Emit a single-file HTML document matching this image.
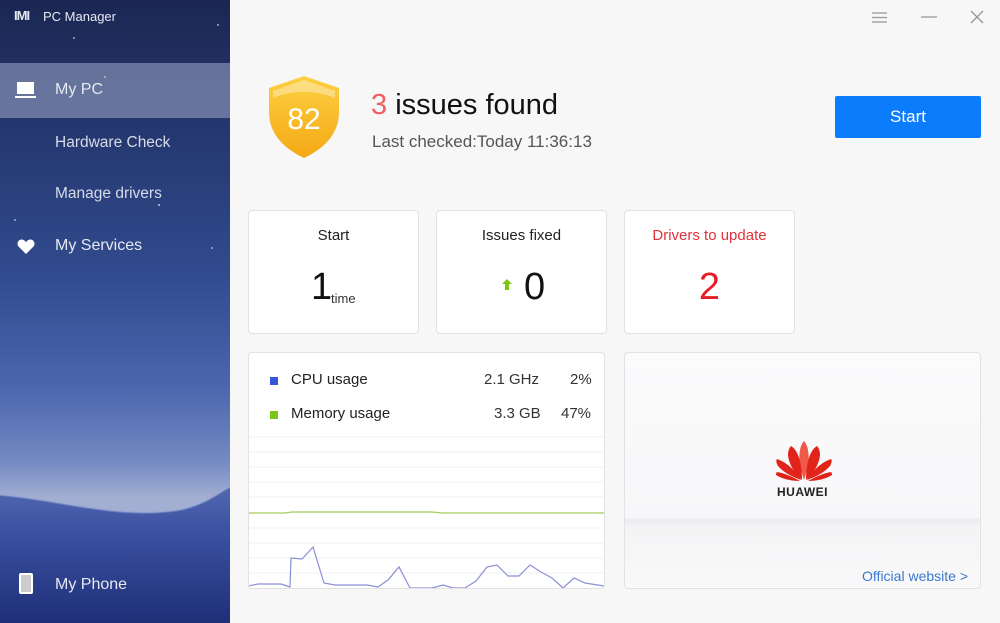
<!DOCTYPE html>
<html><head><meta charset="utf-8"><style>
*{margin:0;padding:0;box-sizing:border-box}
body{width:1000px;height:623px;overflow:hidden;background:#f7f7f8;font-family:"Liberation Sans",sans-serif;position:relative}
.side{position:absolute;left:0;top:0;width:230px;height:623px;overflow:hidden;
background:linear-gradient(180deg,#1b2752 0%,#253870 22%,#324c90 45%,#4a66ad 62%,#7389c2 74%,#a3afd2 80%);}
.dune{position:absolute;left:0;top:0}
.side .t{position:absolute;color:#e6e9f2;font-size:16px}
.card{position:absolute;background:#fff;border:1px solid #e2e2e4;border-radius:4px}
.abs{position:absolute}
</style></head><body>
<div class="side">
<svg class="dune" width="230" height="623">
<defs><linearGradient id="d" x1="0" y1="0" x2="0" y2="1"><stop offset="0" stop-color="#5268b0"/><stop offset="0.35" stop-color="#3a50a0"/><stop offset="1" stop-color="#1f2f78"/></linearGradient></defs>
<path d="M0 495 C60 500 120 520 180 510 C205 505 220 492 230 487 L230 623 L0 623Z" fill="url(#d)"/>
<path d="M0 495 C60 500 120 520 180 510 C205 505 220 492 230 487" stroke="#8ea0d4" stroke-width="2" fill="none" opacity=".5"/>
<circle cx="218" cy="25" r="1" fill="#aab"/><circle cx="74" cy="38" r="1" fill="#aab"/><circle cx="105" cy="77" r="1" fill="#ccd"/><circle cx="159" cy="205" r="1" fill="#ccd"/><circle cx="15" cy="220" r="1" fill="#aab"/><circle cx="212" cy="248" r="1" fill="#aab"/>
</svg>
<div class="abs" style="left:0;top:63px;width:230px;height:55px;background:rgba(160,170,200,.55)"></div>
<div class="t" style="left:14px;top:8px;font-size:13px;font-weight:bold;letter-spacing:-1px">IMI</div>
<div class="t" style="left:43px;top:9px;font-size:13px">PC Manager</div>
<svg class="abs" style="left:15px;top:82px" width="22" height="17"><rect x="2" y="0" width="17" height="12" fill="#fff"/><rect x="0" y="14" width="21" height="2" fill="#fff"/></svg>
<div class="t" style="left:55px;top:81px">My PC</div>
<div class="t" style="left:55px;top:134px;color:#d6dbe8;font-size:15.5px">Hardware Check</div>
<div class="t" style="left:55px;top:185px;color:#d6dbe8;font-size:15.5px">Manage drivers</div>
<svg class="abs" style="left:17px;top:239px" width="18" height="16"><path d="M9 15 L1.5 7.5 C-1 4.5 1.5 0 5 0.5 C7 0.8 8.3 2 9 3.2 C9.7 2 11 0.8 13 0.5 C16.5 0 19 4.5 16.5 7.5Z" fill="#fff"/></svg>
<div class="t" style="left:55px;top:237px">My Services</div>
<div class="abs" style="left:19px;top:573px;width:14px;height:21px;border:2px solid #fff;border-radius:2px;background:#ccc"></div>
<div class="t" style="left:55px;top:576px">My Phone</div>
</div>

<svg class="abs" style="left:870px;top:10px" width="115" height="16">
<g stroke="#999" stroke-width="1.3"><line x1="2" y1="3" x2="17" y2="3"/><line x1="2" y1="7.5" x2="17" y2="7.5"/><line x1="2" y1="12" x2="17" y2="12"/>
<line x1="51" y1="7" x2="67" y2="7"/><line x1="101" y1="1" x2="113" y2="13"/><line x1="113" y1="1" x2="101" y2="13"/></g></svg>

<svg class="abs" style="left:266px;top:74px" width="76" height="86">
<defs><linearGradient id="s" x1="0" y1="0" x2="0" y2="1"><stop offset="0" stop-color="#fdd043"/><stop offset="1" stop-color="#f4a915"/></linearGradient></defs>
<path d="M38 2 L73 14 L73 38 C73 62 55 76 38 84 C21 76 3 62 3 38 L3 14Z" fill="url(#s)"/>
<path d="M38 6 L69 17 L69 24 C50 16 26 16 7 24 L7 17Z" fill="#fff" opacity=".35"/>
<text x="38" y="55" font-family="Liberation Sans" font-size="30" fill="#fff" text-anchor="middle">82</text>
</svg>
<div class="abs" style="left:371px;top:89px;font-size:29px;color:#111"><span style="color:#ee5f5f">3</span> issues found</div>
<div class="abs" style="left:372px;top:132px;font-size:17px;color:#555">Last checked:Today 11:36:13</div>
<div class="abs" style="left:835px;top:96px;width:146px;height:42px;background:#0b7dfc;color:#fff;font-size:17px;text-align:center;line-height:42px;border-radius:2px">Start</div>

<div class="card" style="left:248px;top:210px;width:171px;height:124px">
<div class="abs" style="width:100%;top:16px;text-align:center;font-size:15px;color:#222">Start</div>
<div class="abs" style="left:62px;top:55px;font-size:38px;color:#111">1</div>
<div class="abs" style="left:82px;top:80px;font-size:13px;color:#333">time</div></div>
<div class="card" style="left:436px;top:210px;width:171px;height:124px">
<div class="abs" style="width:100%;top:16px;text-align:center;font-size:15px;color:#222">Issues fixed</div>
<svg class="abs" style="left:65px;top:68px" width="10" height="11"><path d="M5 0 L10 5 L7 5 L7 11 L3 11 L3 5 L0 5Z" fill="#7ac70e"/></svg>
<div class="abs" style="left:87px;top:55px;font-size:38px;color:#111">0</div></div>
<div class="card" style="left:624px;top:210px;width:171px;height:124px">
<div class="abs" style="width:100%;top:16px;text-align:center;font-size:15px;color:#e0323a">Drivers to update</div>
<div class="abs" style="width:100%;top:55px;text-align:center;font-size:38px;color:#e51d25">2</div></div>

<div class="card" style="left:248px;top:352px;width:357px;height:237px;overflow:hidden">
<div class="abs" style="left:21px;top:24px;width:8px;height:8px;background:#3355d6"></div>
<div class="abs" style="left:42px;top:18px;font-size:15px;color:#222">CPU usage</div>
<div class="abs" style="left:235px;top:18px;font-size:15px;color:#333">2.1 GHz</div>
<div class="abs" style="left:321px;top:18px;font-size:15px;color:#333">2%</div>
<div class="abs" style="left:21px;top:58px;width:8px;height:8px;background:#7ec21a"></div>
<div class="abs" style="left:42px;top:52px;font-size:15px;color:#222">Memory usage</div>
<div class="abs" style="left:245px;top:52px;font-size:15px;color:#333">3.3 GB</div>
<div class="abs" style="left:312px;top:52px;font-size:15px;color:#333">47%</div>
<svg class="abs" style="left:-249px;top:-353px" width="1000" height="623">
<g stroke="#f2f2f4" stroke-width="1">
<line x1="248" y1="437" x2="604" y2="437"/><line x1="248" y1="452" x2="604" y2="452"/><line x1="248" y1="467" x2="604" y2="467"/><line x1="248" y1="482" x2="604" y2="482"/><line x1="248" y1="497" x2="604" y2="497"/><line x1="248" y1="528" x2="604" y2="528"/><line x1="248" y1="543" x2="604" y2="543"/><line x1="248" y1="558" x2="604" y2="558"/><line x1="248" y1="573" x2="604" y2="573"/></g>
<polyline fill="none" stroke="#a5cc5a" stroke-width="1.3" points="248,513 285,513 292,512 432,512 442,513 604,513"/>
<polyline fill="none" stroke="#8a8fd8" stroke-width="1.2" points="248,586 258,584 281,584 290,587 291,558 302,559 313,547 324,583 335,585 367,585 378,587 388,580 399,567 410,588 432,588 443,585 453,588 465,588 476,581 487,567 497,565 508,576 519,576 530,565 541,572 552,578 563,588 574,578 585,583 604,586"/>
</svg></div>

<div class="card" style="left:624px;top:352px;width:357px;height:237px;overflow:hidden;background:linear-gradient(180deg,#fbfbfc 0%,#f7f7f9 70%,#ececef 71%,#f4f4f6 74%,#f9f9fa 100%)">
<svg class="abs" style="left:149px;top:86px" width="60" height="44">
<g fill="#e2231a">
<path d="M30 41 C27 32 24 21 26 11 C27 5 30 2 30 2 C30 2 33 5 34 11 C36 21 33 32 30 41Z" fill="#ef5a4a"/>
<path d="M28 41 C21 35 15 26 14 16 C14 11 16 8 17 7 C24 11 28 24 28 41Z"/>
<path d="M32 41 C39 35 45 26 46 16 C46 11 44 8 43 7 C36 11 32 24 32 41Z"/>
<path d="M27 41 C19 38 10 34 4 27 C2 24 2 21 3 20 C12 23 21 31 27 41Z"/>
<path d="M33 41 C41 38 50 34 56 27 C58 24 58 21 57 20 C48 23 39 31 33 41Z"/>
<path d="M26 42 C17 42 8 40 2 36 C2 35 2 34 3 33 C10 34 19 38 26 42Z"/>
<path d="M34 42 C43 42 52 40 58 36 C58 35 58 34 57 33 C50 34 41 38 34 42Z"/>
</g></svg>
<div class="abs" style="width:100%;top:132px;text-align:center;font-size:12px;font-weight:bold;color:#222;letter-spacing:.5px">HUAWEI</div>
<div class="abs" style="right:12px;top:215px;font-size:14px;color:#3a78cc">Official website &gt;</div>
</div>
</body></html>
